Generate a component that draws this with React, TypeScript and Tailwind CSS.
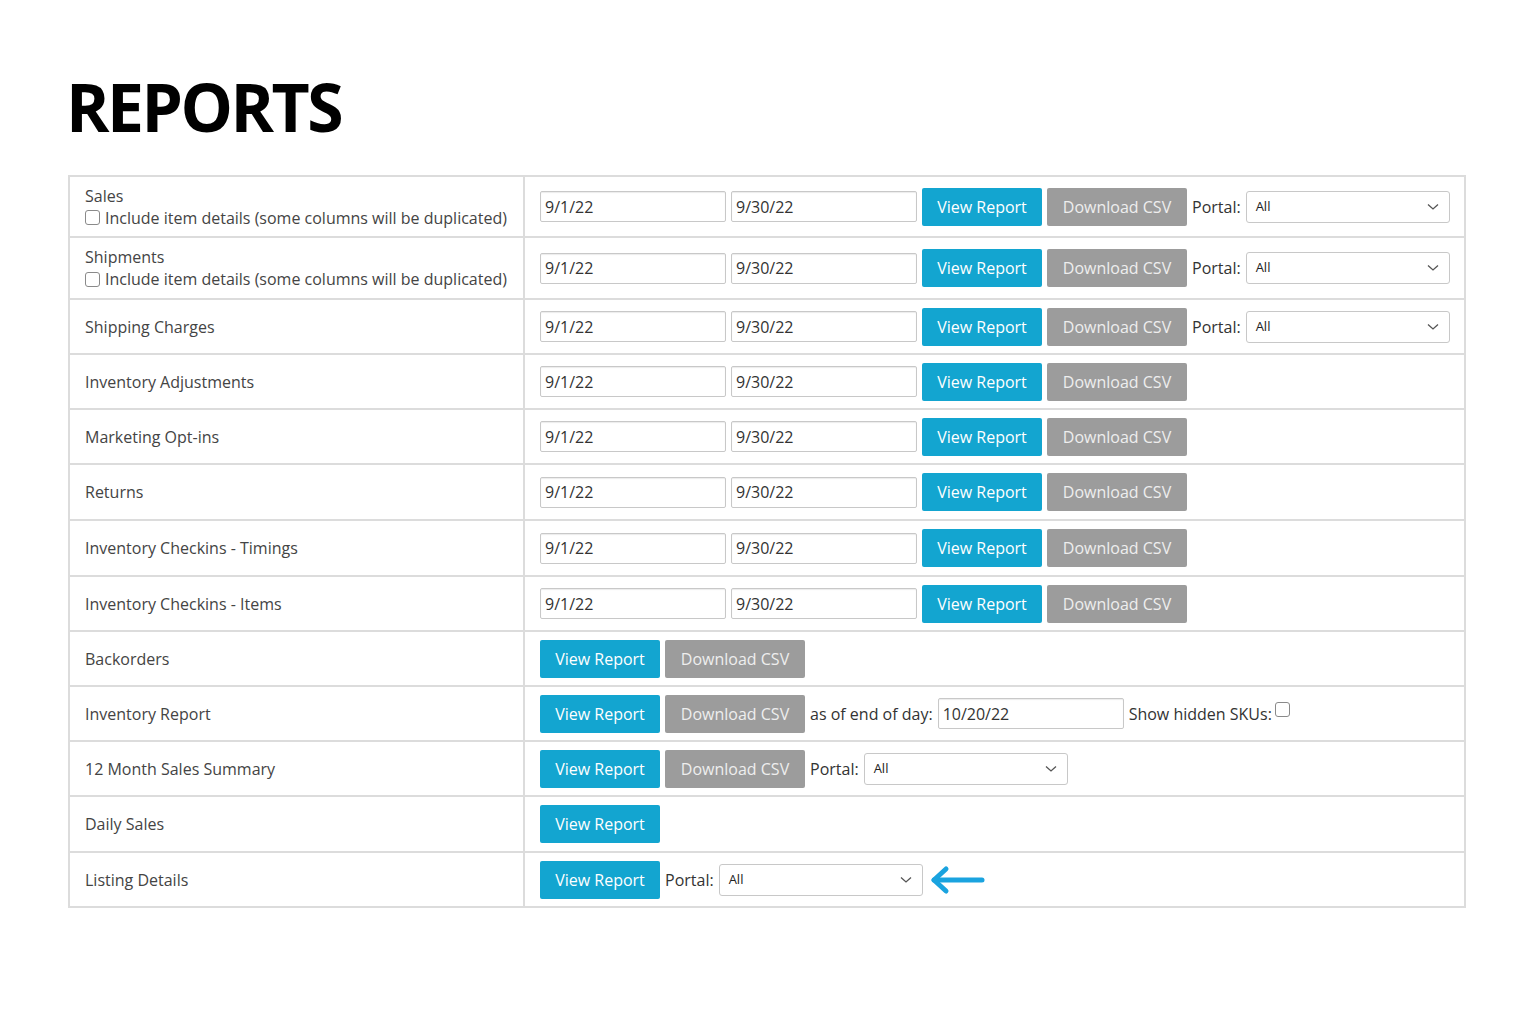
const FONT = "font-['Open_Sans',_'Liberation_Sans',_sans-serif]";

function DateInput({ value }: { value: string }) {
  return (
    <div className="flex h-[31px] w-[186px] items-center rounded-[2px] border border-[#c8c8c8] bg-white pl-[4px] text-[16px] text-[#333] shadow-[inset_0_1px_1px_rgba(0,0,0,0.08)]">
      {value}
    </div>
  );
}

function ViewBtn() {
  return (
    <div className="flex h-[38px] w-[120px] items-center justify-center rounded-[2px] bg-[#13a5d0] text-[16px] text-white">
      View Report
    </div>
  );
}

function CsvBtn() {
  return (
    <div className="flex h-[38px] w-[140px] items-center justify-center rounded-[2px] bg-[#9c9c9c] text-[16px] text-[#eeeeee]">
      Download CSV
    </div>
  );
}

function PortalSelect() {
  return (
    <div className="flex items-center gap-[5px]">
      <span className="text-[16px] text-[#333]">Portal:</span>
      <div className="flex h-[32px] w-[204px] items-center justify-between rounded-[3px] border border-[#c8c8c8] bg-white pl-[9px] pr-[10px] text-[13px] text-[#222]">
        <span>All</span>
        <svg width="12" height="8" viewBox="0 0 12 8" fill="none" stroke="#555" strokeWidth="1.3">
          <path d="M1 1.5 L6 6 L11 1.5" />
        </svg>
      </div>
    </div>
  );
}

function Box() {
  return <span className="inline-block h-[15px] w-[15px] rounded-[3px] border border-[#8a8a8a] bg-white" />;
}

function Dates() {
  return (
    <>
      <DateInput value="9/1/22" />
      <DateInput value="9/30/22" />
    </>
  );
}

type Row = { label: React.ReactNode; right: React.ReactNode };

const withDetails = (name: string) => (
  <div className="leading-[22px]">
    <div>{name}</div>
    <div className="flex items-center gap-[5px]">
      <Box />
      <span>Include item details (some columns will be duplicated)</span>
    </div>
  </div>
);

const fullRight = (
  <>
    <Dates />
    <ViewBtn />
    <CsvBtn />
    <PortalSelect />
  </>
);

const rows: Row[] = [
  { label: withDetails("Sales"), right: fullRight },
  { label: withDetails("Shipments"), right: fullRight },
  { label: "Shipping Charges", right: fullRight },
  ...["Inventory Adjustments", "Marketing Opt-ins", "Returns", "Inventory Checkins - Timings", "Inventory Checkins - Items"].map(
    (label) => ({
      label,
      right: (
        <>
          <Dates />
          <ViewBtn />
          <CsvBtn />
        </>
      ),
    })
  ),
  {
    label: "Backorders",
    right: (
      <>
        <ViewBtn />
        <CsvBtn />
      </>
    ),
  },
  {
    label: "Inventory Report",
    right: (
      <>
        <ViewBtn />
        <CsvBtn />
        <span className="text-[16px] text-[#333]">as of end of day:</span>
        <DateInput value="10/20/22" />
        <span className="flex items-center gap-[3px] text-[16px] text-[#333]">
          Show hidden SKUs:
          <span className="-mt-[6px]">
            <Box />
          </span>
        </span>
      </>
    ),
  },
  {
    label: "12 Month Sales Summary",
    right: (
      <>
        <ViewBtn />
        <CsvBtn />
        <PortalSelect />
      </>
    ),
  },
  { label: "Daily Sales", right: <ViewBtn /> },
  {
    label: "Listing Details",
    right: (
      <>
        <ViewBtn />
        <PortalSelect />
        {/* pointer arrow */}
        <svg width="60" height="30" viewBox="0 0 60 30" fill="none" stroke="#1aa3df" strokeWidth="5" strokeLinecap="round" strokeLinejoin="round">
          <path d="M6 15 H54" />
          <path d="M18 4 L6 15 L18 26" />
        </svg>
      </>
    ),
  },
];

const heights = [
  "h-[59px]",
  "h-[62px]",
  "h-[55px]",
  "h-[55px]",
  "h-[55px]",
  "h-[56px]",
  "h-[56px]",
  "h-[55px]",
  "h-[55px]",
  "h-[55px]",
  "h-[55px]",
  "h-[56px]",
  "h-[55px]",
];

export default function App() {
  return (
    <div className={`${FONT} min-h-screen bg-white pl-[68px] pt-[66px]`}>
      <h1 className="-ml-[2px] m-0 text-[66px] font-bold leading-[80px] tracking-[-2.5px] text-black">REPORTS</h1>
      <div className="mt-[29px] w-[1398px] border-2 border-[#dcdcdc] bg-white">
        {rows.map((r, i) => (
          <div key={i} className={`flex ${heights[i]} ${i > 0 ? "border-t-2 border-[#dcdcdc]" : ""}`}>
            <div className="flex w-[455px] shrink-0 items-center border-r-2 border-[#dcdcdc] pl-[15px] text-[16px] text-[#444]">
              {r.label}
            </div>
            <div className="flex flex-1 items-center gap-[5px] pl-[15px]">{r.right}</div>
          </div>
        ))}
      </div>
    </div>
  );
}
